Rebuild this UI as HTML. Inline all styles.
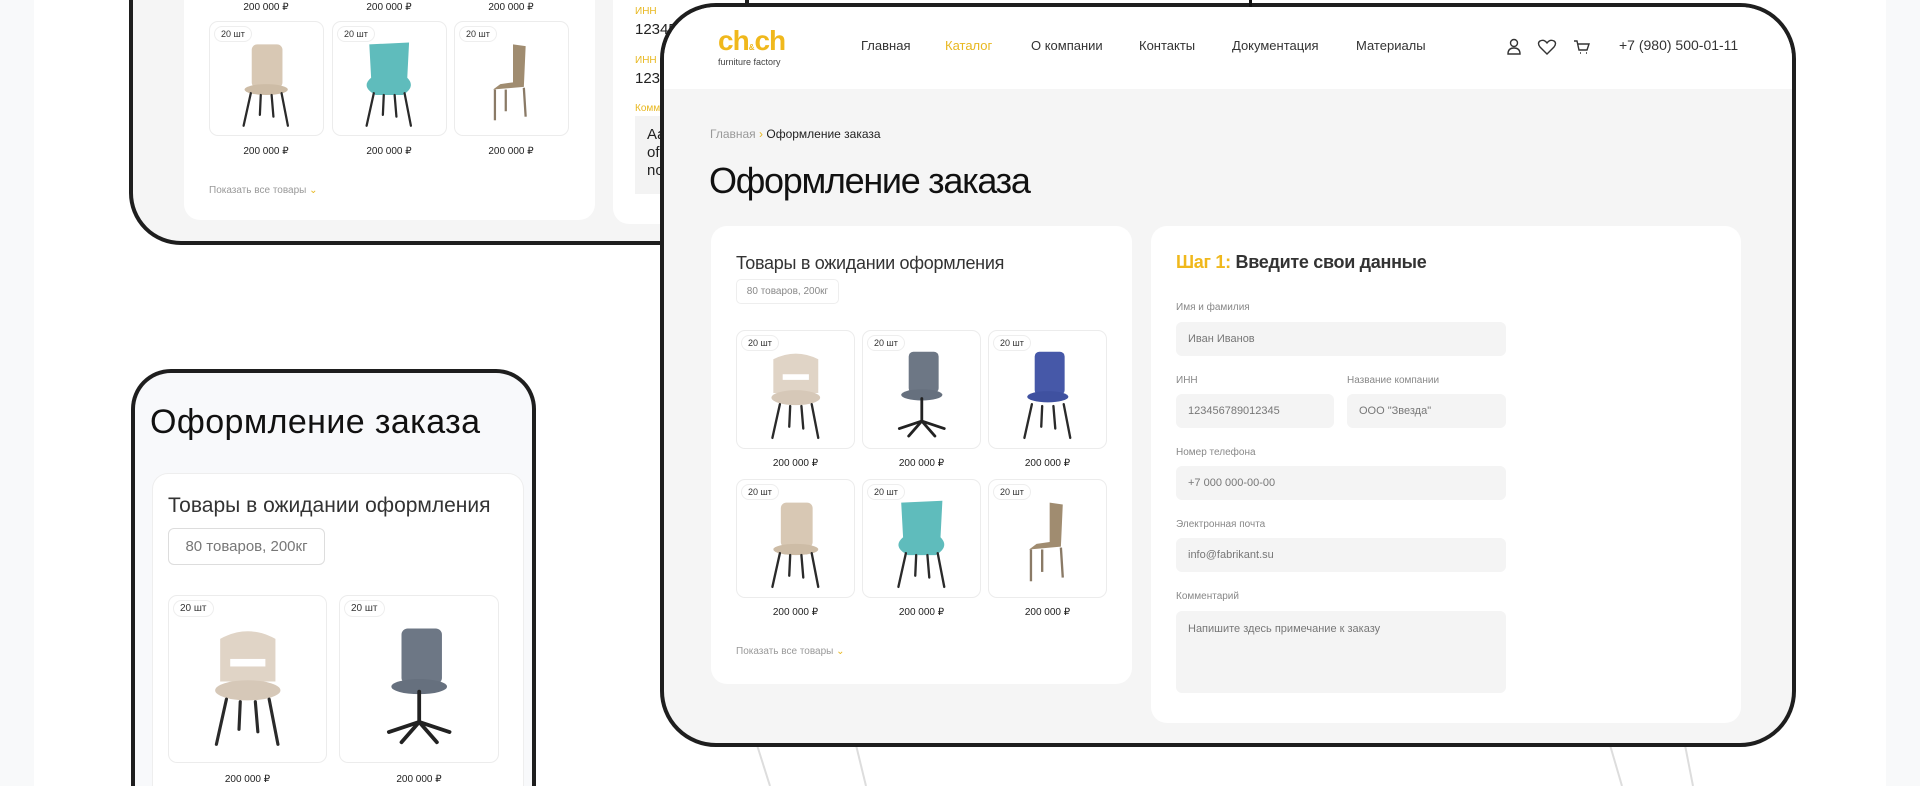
<!DOCTYPE html>
<html style="width:1920px;height:786px;overflow:hidden"><head><meta charset="utf-8">
<style>
*{margin:0;padding:0;box-sizing:border-box}
body{width:1920px;height:786px;overflow:hidden;background:#f8f9fa;font-family:"Liberation Sans","Noto Sans CJK SC",sans-serif;color:#222}
#root{position:relative;width:1920px;height:786px;overflow:hidden}
.a{position:absolute}
.frame{position:absolute;border:4px solid #1e1e1e;overflow:hidden}
.card{position:absolute;background:#fff;border-radius:16px}
.tile{position:absolute;background:#fff;border:1px solid #ececec;border-radius:9px}
.tile .b{position:absolute;left:4px;top:4px;border:1px solid #eee;border-radius:10px;font-size:9px;padding:2px 6px;color:#333;background:#fff}
.tile svg{position:absolute;left:10%;top:12%;width:80%;height:82%}
.price{position:absolute;font-size:10px;color:#222;text-align:center}
.lbl{position:absolute;font-size:10px;color:#888}
.inp{position:absolute;background:#f4f4f4;border-radius:6px;font-size:11px;color:#777;padding-left:12px;display:flex;align-items:center}
.nav{position:absolute;top:31px;font-size:13px;color:#333}
</style></head><body><div id="root">
<div class="a" style="left:34px;top:0;width:1852px;height:786px;background:#fff"></div>
<svg class="a" style="left:0;top:0" width="1920" height="786">
<g stroke="#ddd" stroke-width="2"><line x1="757" y1="745" x2="770" y2="786"/><line x1="856" y1="745" x2="866" y2="786"/><line x1="1610" y1="745" x2="1622" y2="786"/><line x1="1685" y1="745" x2="1693" y2="786"/></g>
</svg>

<svg width="0" height="0" style="position:absolute">
<defs>
<g id="legs4" stroke="#2a2a2a" stroke-width="2.5" stroke-linecap="round"><line x1="33" y1="62" x2="25" y2="98"/><line x1="67" y1="62" x2="74" y2="98"/><line x1="44" y1="64" x2="43" y2="86"/><line x1="56" y1="64" x2="58" y2="88"/></g>
</defs>
</svg>

<!-- top-left frame -->
<div class="frame" style="left:129px;top:-60px;width:620px;height:305px;border-radius:0 0 52px 52px;background:#f5f5f5">
 <div class="card" style="left:51px;top:-20px;width:411px;height:296px">
  <div class="price" style="left:25px;top:78px;width:114px">200 000 ₽</div>
  <div class="price" style="left:148px;top:78px;width:114px">200 000 ₽</div>
  <div class="price" style="left:270px;top:78px;width:114px">200 000 ₽</div>
  <div class="tile" style="left:25px;top:97px;width:115px;height:115px"><div class="b">20 шт</div><svg viewBox="0 0 100 100"><rect x="34" y="8" width="34" height="48" rx="6" fill="#d8c8b4"/><ellipse cx="50" cy="58" rx="24" ry="6" fill="#cdbca6"/><use href="#legs4"/></svg></div>
  <div class="tile" style="left:148px;top:97px;width:115px;height:115px"><div class="b">20 шт</div><svg viewBox="0 0 100 100"><path d="M28 8 L72 6 L70 45 Q80 55 65 64 L35 64 Q18 55 30 45Z" fill="#5fbcbc"/><use href="#legs4"/></svg></div>
  <div class="tile" style="left:270px;top:97px;width:115px;height:115px"><div class="b">20 шт</div><svg viewBox="0 0 100 100"><path d="M52 8 L66 10 L64 55 L30 58 L38 52 L52 50Z" fill="#a08c70"/><g stroke="#8a7a66" stroke-width="2.5"><line x1="32" y1="58" x2="32" y2="92"/><line x1="64" y1="56" x2="66" y2="88"/><line x1="44" y1="58" x2="44" y2="82"/></g></svg></div>
  <div class="price" style="left:25px;top:222px;width:114px">200 000 ₽</div>
  <div class="price" style="left:148px;top:222px;width:114px">200 000 ₽</div>
  <div class="price" style="left:270px;top:222px;width:114px">200 000 ₽</div>
  <div class="a" style="left:25px;top:261px;font-size:10px;color:#999">Показать все товары <span style="color:#e8b820">⌄</span></div>
 </div>
 <div class="card" style="left:480px;top:-20px;width:200px;height:300px">
  <div class="a" style="left:22px;top:82px;font-size:10px;color:#e8b820">ИНН</div>
  <div class="a" style="left:22px;top:97px;font-size:15px">12345</div>
  <div class="a" style="left:22px;top:131px;font-size:10px;color:#e8b820">ИНН</div>
  <div class="a" style="left:22px;top:146px;font-size:15px">12345</div>
  <div class="a" style="left:22px;top:179px;font-size:10px;color:#e8b820">Комментарий</div>
  <div class="a" style="left:22px;top:192px;width:150px;height:78px;background:#f3f3f3;font-size:15px;padding:10px 12px;line-height:18px">Аа<br>of<br>no</div>
 </div>
</div>

<!-- bottom-left frame -->
<div class="frame" style="left:131px;top:369px;width:405px;height:417px;border-bottom:none;border-radius:40px 40px 0 0;background:#f8f9fb">
 <div class="a" style="left:15px;top:30px;font-size:34px;color:#111;letter-spacing:0.4px">Оформление заказа</div>
 <div class="card" style="left:17px;top:100px;width:372px;height:330px;border:1px solid #eee;border-bottom:none;border-radius:16px 16px 0 0">
  <div class="a" style="left:15px;top:20px;font-size:21px;color:#333">Товары в ожидании оформления</div>
  <div class="a" style="left:15px;top:54px;width:157px;height:37px;border:1px solid #ddd;border-radius:6px;font-size:15px;color:#777;display:flex;align-items:center;justify-content:center">80 товаров, 200кг</div>
  <div class="tile" style="left:15px;top:121px;width:159px;height:168px"><div class="b" style="font-size:10px">20 шт</div><svg viewBox="0 0 100 100"><path d="M28 14 Q50 2 72 14 L72 48 L28 48Z" fill="#e0d4c6"/><rect x="36" y="30" width="28" height="6" fill="#fff"/><ellipse cx="50" cy="55" rx="26" ry="8" fill="#d6c8b8"/><use href="#legs4"/></svg></div>
  <div class="tile" style="left:186px;top:121px;width:160px;height:168px"><div class="b" style="font-size:10px">20 шт</div><svg viewBox="0 0 100 100"><rect x="36" y="6" width="32" height="44" rx="5" fill="#6d7785"/><ellipse cx="50" cy="52" rx="22" ry="6" fill="#66707e"/><g stroke="#222" stroke-width="3" stroke-linecap="round"><line x1="50" y1="56" x2="50" y2="80"/><line x1="50" y1="80" x2="26" y2="88"/><line x1="50" y1="80" x2="74" y2="88"/><line x1="50" y1="80" x2="36" y2="96"/><line x1="50" y1="80" x2="64" y2="96"/></g></svg></div>
  <div class="price" style="left:15px;top:300px;width:159px">200 000 ₽</div>
  <div class="price" style="left:186px;top:300px;width:160px">200 000 ₽</div>
 </div>
</div>

<!-- main frame -->
<div class="frame" style="left:660px;top:3px;width:1136px;height:744px;border-radius:56px;background:#f5f5f5">
 <div class="a" style="left:0;top:0;width:100%;height:82px;background:#fff"></div>
 <div class="a" style="left:54px;top:18px;font-size:28px;font-weight:bold;color:#f0b81c;letter-spacing:-1px">ch<span style="font-size:8px;letter-spacing:0">&amp;</span>ch</div>
 <div class="a" style="left:54px;top:50px;font-size:9px;color:#444">furniture factory</div>
 <div class="nav" style="left:197px">Главная</div>
 <div class="nav" style="left:281px;color:#e8b820">Каталог</div>
 <div class="nav" style="left:367px">О компании</div>
 <div class="nav" style="left:475px">Контакты</div>
 <div class="nav" style="left:568px">Документация</div>
 <div class="nav" style="left:692px">Материалы</div>
 <svg class="a" style="left:840px;top:30px" width="100" height="20" viewBox="0 0 100 20" fill="none" stroke="#333" stroke-width="1.4">
  <circle cx="10" cy="6" r="3.5"/><path d="M4 17 Q4 11 10 11 Q16 11 16 17Z"/>
  <path d="M43 17 L36 10 Q33 6 36 4 Q40 2 43 6 Q46 2 50 4 Q53 6 50 10Z"/>
  <path d="M70 4 L73 4 L75 13 L83 13 L85 7 L74 7 M76 16 h1 M82 16 h1"/>
 </svg>
 <div class="nav" style="left:955px;font-size:14px;top:30px">+7 (980) 500-01-11</div>

 <div class="a" style="left:46px;top:120px;font-size:12px;color:#999">Главная <span style="color:#e8b820">›</span> <span style="color:#222">Оформление заказа</span></div>
 <div class="a" style="left:45px;top:153px;font-size:36px;color:#111;letter-spacing:-1.3px">Оформление заказа</div>

 <div class="card" style="left:47px;top:219px;width:421px;height:458px">
  <div class="a" style="left:25px;top:27px;font-size:18px;color:#333;letter-spacing:-0.3px">Товары в ожидании оформления</div>
  <div class="a" style="left:25px;top:53px;width:103px;height:25px;border:1px solid #eee;border-radius:5px;font-size:10px;color:#888;display:flex;align-items:center;justify-content:center">80 товаров, 200кг</div>

  <div class="tile" style="left:25px;top:104px;width:119px;height:119px"><div class="b">20 шт</div><svg viewBox="0 0 100 100"><path d="M26 14 Q50 2 74 14 L74 50 L26 50Z" fill="#e0d4c6"/><rect x="36" y="30" width="28" height="6" fill="#fff"/><ellipse cx="50" cy="55" rx="26" ry="8" fill="#d6c8b8"/><use href="#legs4"/></svg></div>
  <div class="tile" style="left:151px;top:104px;width:119px;height:119px"><div class="b">20 шт</div><svg viewBox="0 0 100 100"><rect x="36" y="6" width="32" height="44" rx="5" fill="#6d7785"/><ellipse cx="50" cy="52" rx="22" ry="6" fill="#66707e"/><g stroke="#222" stroke-width="3" stroke-linecap="round"><line x1="50" y1="56" x2="50" y2="80"/><line x1="50" y1="80" x2="26" y2="88"/><line x1="50" y1="80" x2="74" y2="88"/><line x1="50" y1="80" x2="36" y2="96"/><line x1="50" y1="80" x2="64" y2="96"/></g></svg></div>
  <div class="tile" style="left:277px;top:104px;width:119px;height:119px"><div class="b">20 шт</div><svg viewBox="0 0 100 100"><rect x="36" y="6" width="32" height="46" rx="5" fill="#4658a8"/><ellipse cx="50" cy="54" rx="22" ry="6" fill="#3f51a0"/><use href="#legs4"/></svg></div>
  <div class="price" style="left:25px;top:232px;width:119px">200 000 ₽</div>
  <div class="price" style="left:151px;top:232px;width:119px">200 000 ₽</div>
  <div class="price" style="left:277px;top:232px;width:119px">200 000 ₽</div>

  <div class="tile" style="left:25px;top:253px;width:119px;height:119px"><div class="b">20 шт</div><svg viewBox="0 0 100 100"><rect x="34" y="8" width="34" height="48" rx="6" fill="#d8c8b4"/><ellipse cx="50" cy="58" rx="24" ry="6" fill="#cdbca6"/><use href="#legs4"/></svg></div>
  <div class="tile" style="left:151px;top:253px;width:119px;height:119px"><div class="b">20 шт</div><svg viewBox="0 0 100 100"><path d="M28 8 L72 6 L70 45 Q80 55 65 64 L35 64 Q18 55 30 45Z" fill="#5fbcbc"/><use href="#legs4"/></svg></div>
  <div class="tile" style="left:277px;top:253px;width:119px;height:119px"><div class="b">20 шт</div><svg viewBox="0 0 100 100"><path d="M52 8 L66 10 L64 55 L30 58 L38 52 L52 50Z" fill="#a08c70"/><g stroke="#8a7a66" stroke-width="2.5"><line x1="32" y1="58" x2="32" y2="92"/><line x1="64" y1="56" x2="66" y2="88"/><line x1="44" y1="58" x2="44" y2="82"/></g></svg></div>
  <div class="price" style="left:25px;top:381px;width:119px">200 000 ₽</div>
  <div class="price" style="left:151px;top:381px;width:119px">200 000 ₽</div>
  <div class="price" style="left:277px;top:381px;width:119px">200 000 ₽</div>
  <div class="a" style="left:25px;top:420px;font-size:10px;color:#999">Показать все товары <span style="color:#e8b820">⌄</span></div>
 </div>

 <div class="card" style="left:487px;top:219px;width:590px;height:497px">
  <div class="a" style="left:25px;top:26px;font-size:18px;font-weight:bold;color:#333;letter-spacing:-0.3px"><span style="color:#f0b81c">Шаг 1:</span> Введите свои данные</div>
  <div class="lbl" style="left:25px;top:76px">Имя и фамилия</div>
  <div class="inp" style="left:25px;top:96px;width:330px;height:34px">Иван Иванов</div>
  <div class="lbl" style="left:25px;top:149px">ИНН</div>
  <div class="lbl" style="left:196px;top:149px">Название компании</div>
  <div class="inp" style="left:25px;top:168px;width:158px;height:34px">123456789012345</div>
  <div class="inp" style="left:196px;top:168px;width:159px;height:34px">ООО "Звезда"</div>
  <div class="lbl" style="left:25px;top:221px">Номер телефона</div>
  <div class="inp" style="left:25px;top:240px;width:330px;height:34px">+7 000 000-00-00</div>
  <div class="lbl" style="left:25px;top:293px">Электронная почта</div>
  <div class="inp" style="left:25px;top:312px;width:330px;height:34px">info@fabrikant.su</div>
  <div class="lbl" style="left:25px;top:365px">Комментарий</div>
  <div class="inp" style="left:25px;top:385px;width:330px;height:82px;align-items:flex-start;padding-top:12px">Напишите здесь примечание к заказу</div>
 </div>
</div>
<div class="a" style="left:1249px;top:0;width:3px;height:7px;background:#111"></div>
</div></body></html>
